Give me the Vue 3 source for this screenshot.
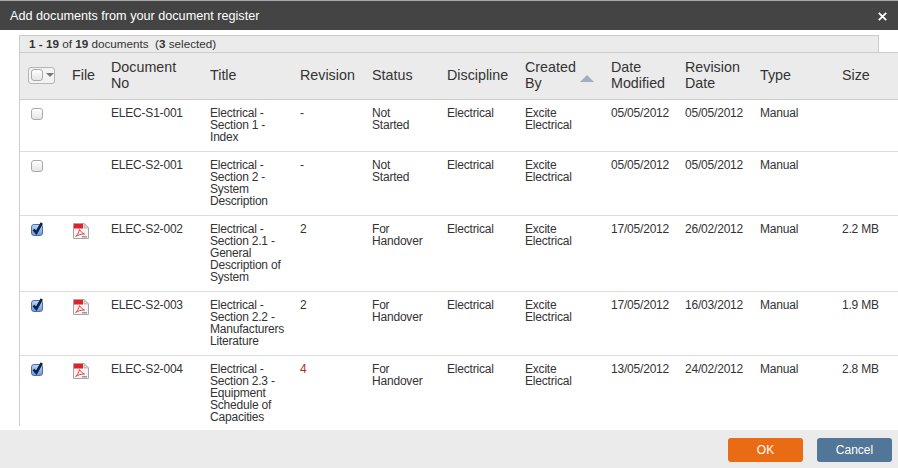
<script setup>
const columns = [
  { label: '', width: 52 },
  { label: 'File', width: 39 },
  { label: 'Document\nNo', width: 99 },
  { label: 'Title', width: 90 },
  { label: 'Revision', width: 72 },
  { label: 'Status', width: 75 },
  { label: 'Discipline', width: 78 },
  { label: 'Created\nBy', width: 86, sorted: true },
  { label: 'Date\nModified', width: 74 },
  { label: 'Revision\nDate', width: 75 },
  { label: 'Type', width: 82 },
  { label: 'Size', width: 56 }
]

const docs = [
  { no: 'ELEC-S1-001', title: 'Electrical - Section 1 - Index', rev: '-', status: 'Not\nStarted', modified: '05/05/2012', revDate: '05/05/2012', size: '', checked: false },
  { no: 'ELEC-S2-001', title: 'Electrical - Section 2 - System Description', rev: '-', status: 'Not\nStarted', modified: '05/05/2012', revDate: '05/05/2012', size: '', checked: false },
  { no: 'ELEC-S2-002', title: 'Electrical - Section 2.1 - General Description of System', rev: '2', status: 'For\nHandover', modified: '17/05/2012', revDate: '26/02/2012', size: '2.2 MB', checked: true },
  { no: 'ELEC-S2-003', title: 'Electrical - Section 2.2 - Manufacturers Literature', rev: '2', status: 'For\nHandover', modified: '17/05/2012', revDate: '16/03/2012', size: '1.9 MB', checked: true },
  { no: 'ELEC-S2-004', title: 'Electrical - Section 2.3 - Equipment Schedule of Capacities', rev: '4', status: 'For\nHandover', modified: '13/05/2012', revDate: '24/02/2012', size: '2.8 MB', checked: true, revRed: true }
]
</script>

<template>
  <div class="dialog">
    <header class="title-bar">
      <span>Add documents from your document register</span>
      <svg class="close" width="9" height="9" viewBox="0 0 9 9">
        <path d="M.8.8l7.400 7.400M8.200.8l-7.400 7.400" stroke="#fff" stroke-width="1.800" />
      </svg>
    </header>

    <main class="content">
      <div class="frame">
        <div class="summary"><b>1 - 19</b> of <b>19</b> documents&nbsp; (<b>3</b> selected)</div>
        <table class="docs">
          <colgroup>
            <col v-for="col in columns" :key="col.label" :style="{ width: col.width + 'px' }" />
          </colgroup>
          <thead>
            <tr>
              <th v-for="(col, i) in columns" :key="col.label">
                <span v-if="i === 0" class="select-all"><span class="box small"></span><span class="caret"></span></span>
                <template v-else>{{ col.label }}</template>
                <span v-if="col.sorted" class="sort-arrow"></span>
              </th>
            </tr>
          </thead>
          <tbody>
            <tr v-for="doc in docs" :key="doc.no">
              <td class="check-cell">
                <span class="box" :class="{ checked: doc.checked }">
                  <svg v-if="doc.checked" class="tick" width="13" height="14" viewBox="0 0 13 14">
                    <path d="M2.500 7.500l2.800 3.200L10.800 1" fill="none" stroke="#0b2545" stroke-width="2.600" />
                  </svg>
                </span>
              </td>
              <td class="file-cell">
                <svg v-if="doc.checked" class="pdf" width="16" height="16" viewBox="0 0 16 16">
                  <path d="M.5.5h10.500l4.500 4.500v10.500H.5z" fill="#f4f4f4" stroke="#a5a5a5" />
                  <path d="M11 .5v4.500h4.500z" fill="#d8d8d8" stroke="#a5a5a5" stroke-width=".6" />
                  <rect x="1" y="1" width="9" height="4.500" fill="#e2222b" />
                  <path d="M6.500 6.500c-.5 2 -1.500 5 -3.800 7 2.200-1.500 5-2.500 8.800-2.500-2-.7-4-2.500-5-4.500z" fill="none" stroke="#e2444a" stroke-width="1" />
                  <rect x="9" y="13" width="5" height="1.500" fill="#9a9a9a" />
                </svg>
              </td>
              <td>{{ doc.no }}</td>
              <td>{{ doc.title }}</td>
              <td :class="{ 'rev-red': doc.revRed }">{{ doc.rev }}</td>
              <td class="status">{{ doc.status }}</td>
              <td>Electrical</td>
              <td>Excite Electrical</td>
              <td>{{ doc.modified }}</td>
              <td>{{ doc.revDate }}</td>
              <td>Manual</td>
              <td>{{ doc.size }}</td>
            </tr>
          </tbody>
        </table>
      </div>
    </main>

    <footer class="actions">
      <button class="btn ok">OK</button>
      <button class="btn cancel">Cancel</button>
    </footer>
  </div>
</template>

<style>
html,
body {
  margin: 0;
  background: #fff;
}
</style>

<style scoped>
.dialog {
  width: 898px;
  height: 468px;
  display: flex;
  flex-direction: column;
  overflow: hidden;
  font-family: "Liberation Sans", Arial, sans-serif;
  color: #333;
}
.title-bar {
  flex: none;
  height: 29px;
  border-top: 1px solid #a9a9a9;
  background: #444;
  color: #fff;
  font-size: 12.650px;
  display: flex;
  align-items: center;
  justify-content: space-between;
  padding: 0 11px 0 10px;
}
.close {
  margin-top: 1px;
}
.content {
  flex: 1;
  min-height: 0;
  padding: 5px 0 4px 19px;
}
.frame {
  height: 100%;
  width: 879px;
  border-left: 1px solid #ccc;
  box-sizing: border-box;
  overflow: hidden;
}
.summary {
  width: 859px;
  height: 17px;
  box-sizing: border-box;
  border: 1px solid #ccc;
  border-left: 0;
  border-bottom: 0;
  background: #ebebeb;
  font-size: 11.700px;
  line-height: 15px;
  padding-left: 9px;
}
.docs {
  table-layout: fixed;
  width: 878px;
  border-collapse: collapse;
}
th {
  height: 47px;
  box-sizing: border-box;
  padding: 0 6px 2px 0;
  background: #ebebeb;
  border-top: 1px solid #ccc;
  border-bottom: 1px solid #ccc;
  text-align: left;
  font-weight: normal;
  font-size: 14.300px;
  line-height: 16px;
  white-space: pre-line;
  position: relative;
}
th:first-child {
  padding-left: 8px;
}
td {
  padding: 7px 6px 8px 0;
  border-bottom: 1px solid #ddd;
  vertical-align: top;
  line-height: 12px;
  font-size: 12px;
  letter-spacing: -0.200px;
}
.status {
  white-space: pre-line;
}
.check-cell {
  padding-left: 11px;
}
.box {
  display: block;
  width: 10px;
  height: 10px;
  border: 1px solid #aaa;
  border-radius: 3px;
  background: linear-gradient(#fff, #e4e4e4);
  position: relative;
  margin-top: 1px;
}
.box.checked {
  border-color: #4d6fa8;
  background: linear-gradient(#bcd3f2, #6f9be0);
}
.tick {
  position: absolute;
  left: -1px;
  top: -3px;
}
.pdf {
  display: block;
  margin-left: 1px;
}
.select-all {
  display: flex;
  align-items: center;
  gap: 3px;
  width: 27px;
  height: 17px;
  padding-left: 2px;
  box-sizing: border-box;
  border: 1px solid #b5b5b5;
  border-radius: 3px;
  background: #f3f3f3;
}
.box.small {
  width: 10px;
  height: 10px;
  margin: 0;
}
.caret {
  border: 4px solid transparent;
  border-top: 4px solid #777;
  border-bottom: 0;
}
.sort-arrow {
  position: absolute;
  right: 17px;
  top: 22px;
  border: 7px solid transparent;
  border-top: 0;
  border-bottom: 7px solid #a3adbf;
}
.rev-red {
  color: #b03020;
}
.actions {
  flex: none;
  height: 38px;
  background: #ebebeb;
  display: flex;
  justify-content: flex-end;
  align-items: flex-start;
  gap: 14px;
  padding: 8px 6px 0 0;
  box-sizing: border-box;
}
.btn {
  width: 75px;
  height: 24px;
  border: 0;
  border-radius: 3px;
  color: #fff;
  font: 12px "Liberation Sans", Arial, sans-serif;
  padding: 0;
}
.ok {
  background: #e96c15;
}
.cancel {
  background: #527698;
}
</style>
